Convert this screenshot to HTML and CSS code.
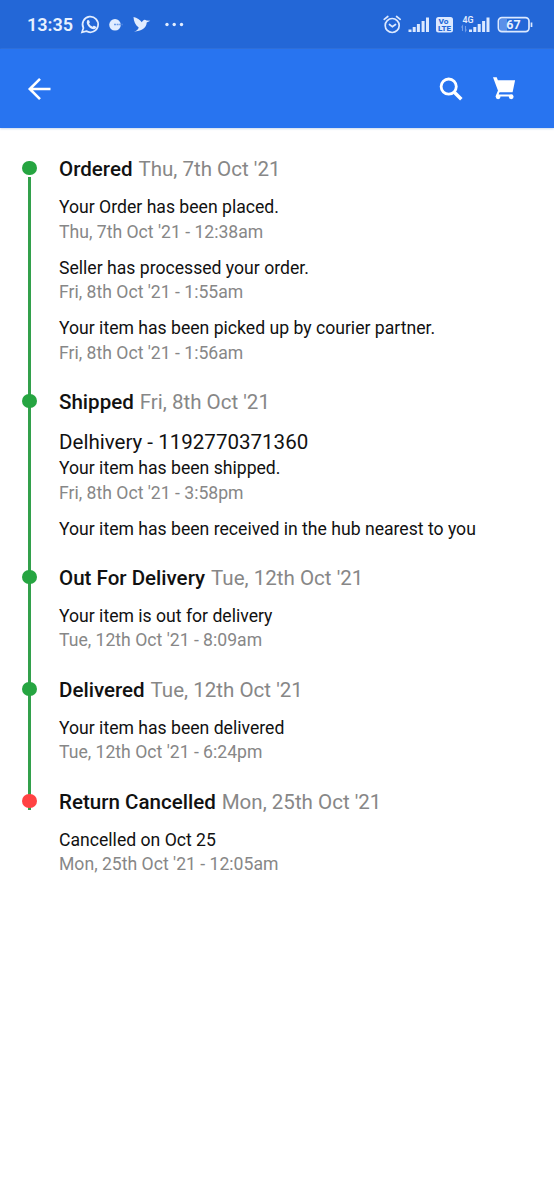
FILE: index.html
```html
<!DOCTYPE html>
<html lang="en">
<head>
<meta charset="utf-8">
<title>Order tracking</title>
<link rel="stylesheet" href="styles.css">
</head>
<body>
<header class="status">
  <span class="clock">13:35</span>
  <svg class="left-icons" width="110" height="49" viewBox="0 0 110 49">
    <path fill="none" stroke="#e2edff" stroke-width="1.7" d="M3 32.300 4.400 28A7.800 7.800 0 1 1 7.300 31.100Z"/>
    <path fill="#e2edff" d="M8.200 20.400c.8-.8 1.500-.6 1.900.2l.7 1.500c.2.500-.5 1.100-.8 1.500.8 1.500 1.900 2.500 3.500 3.200.5-.5 1-1.400 1.600-1.100l1.600.8c.9.500.3 1.800-.4 2.300-3.300 2.100-10.500-4.300-8.100-8.400z"/>
    <circle cx="36" cy="24.800" r="5.800" fill="#e2edff"/>
    <path d="M35 24.600h8.500" stroke="#6d9de9" stroke-width="1.500" stroke-dasharray="2 .6"/>
    <path fill="#e2edff" d="M54.500 17c3.500 1 6.600 2.500 8.300 5.200 1.300-2.400 3-3.200 4.700-1.600l3.800.2-3.600 1.800c-.2 5.400-5.400 8.600-12.700 9.200 2.600-1.200 4.400-2.600 4.700-4.400-3.400-2.400-4.900-5.700-5.200-10.400z"/>
    <g fill="#e2edff"><circle cx="88" cy="24.500" r="1.700"/><circle cx="95.200" cy="24.500" r="1.700"/><circle cx="102.500" cy="24.500" r="1.700"/></g>
  </svg>
  <svg class="right-icons" width="154" height="49" viewBox="380 0 154 49">
    <g fill="none" stroke="#dce9ff" stroke-width="1.700" stroke-linecap="round">
      <circle cx="392.200" cy="25.500" r="7"/>
      <path d="M384.200 19.300l3.600-2.800M400.200 19.300l-3.600-2.800M389.500 24.500l2.900 2.300 3.100-2.300"/>
    </g>
    <g fill="#dce9ff">
      <path d="M408.500 29.500h3V32h-3zM412.700 27h3v5h-3zM416.900 24h3v8h-3zM421.600 21h3v11h-3zM426 17.500h3V32h-3z"/>
      <rect x="436" y="17" width="17" height="15.500" rx="2.500"/>
      <path d="M469 29.500h3V32h-3zM473.300 27h3v5h-3zM477.700 24h3v8h-3zM482.100 21h3v11h-3zM486.500 17.500h3V32h-3z"/>
    </g>
    <text class="volte" x="443.500" y="24.200" textLength="10" lengthAdjust="spacingAndGlyphs">Vo</text>
    <text class="volte" x="444.500" y="31" textLength="13" lengthAdjust="spacingAndGlyphs">LTE</text>
    <text class="network" x="462.500" y="22.500">4G</text>
    <path d="M462.500 31v-5l-1 1.500M465.500 26v5l1-1.500" fill="none" stroke="#74a0ea" stroke-width="1.100"/>
    <rect x="500" y="19" width="7" height="12" fill="#5b90e8"/>
    <rect x="498.400" y="17.600" width="30.600" height="14" rx="3.500" fill="none" stroke="#dce9ff" stroke-width="1.700"/>
    <path d="M531.500 22.500v4.500" stroke="#dce9ff" stroke-width="1.700"/>
    <text class="battery" x="513.500" y="29">67</text>
  </svg>
</header>
<nav class="toolbar">
  <svg class="back" width="24" height="24" viewBox="0 0 24 24"><path d="M23.500 12H3M13 1.800 2.800 12 13 22.200" fill="none" stroke="#fff" stroke-width="2.600"/></svg>
  <svg class="search" width="24" height="24" viewBox="0 0 24 24"><circle cx="9.700" cy="9.600" r="7.600" fill="none" stroke="#fff" stroke-width="2.800"/><path d="m15.300 15.200 7 7" stroke="#fff" stroke-width="3.500"/></svg>
  <svg class="cart" width="24" height="24" viewBox="0 0 24 24"><path d="M0 .2h3.700L4.900 3.300h17.200L19.600 15.200H5.600z" fill="#fff"/><path d="M5.900 14 4 18.500h15.500" fill="none" stroke="#fff" stroke-width="2"/><circle cx="5.100" cy="19.800" r="2.400" fill="#fff"/><circle cx="18.200" cy="19.800" r="2.400" fill="#fff"/></svg>
</nav>
<main class="timeline">
  <section class="step first">
    <h2>Ordered <span>Thu, 7th Oct '21</span></h2>
    <div class="event"><p>Your Order has been placed.</p><time>Thu, 7th Oct '21 - 12:38am</time></div>
    <div class="event"><p>Seller has processed your order.</p><time>Fri, 8th Oct '21 - 1:55am</time></div>
    <div class="event"><p>Your item has been picked up by courier partner.</p><time>Fri, 8th Oct '21 - 1:56am</time></div>
  </section>
  <section class="step">
    <h2>Shipped <span>Fri, 8th Oct '21</span></h2>
    <p class="courier">Delhivery - 1192770371360</p>
    <div class="event"><p>Your item has been shipped.</p><time>Fri, 8th Oct '21 - 3:58pm</time></div>
    <div class="event"><p>Your item has been received in the hub nearest to you</p></div>
  </section>
  <section class="step">
    <h2>Out For Delivery <span>Tue, 12th Oct '21</span></h2>
    <div class="event"><p>Your item is out for delivery</p><time>Tue, 12th Oct '21 - 8:09am</time></div>
  </section>
  <section class="step">
    <h2>Delivered <span>Tue, 12th Oct '21</span></h2>
    <div class="event"><p>Your item has been delivered</p><time>Tue, 12th Oct '21 - 6:24pm</time></div>
  </section>
  <section class="step cancelled">
    <h2>Return Cancelled <span>Mon, 25th Oct '21</span></h2>
    <div class="event"><p>Cancelled on Oct 25</p><time>Mon, 25th Oct '21 - 12:05am</time></div>
  </section>
</main>
</body>
</html>
```
FILE: styles.css
```css
* { box-sizing: border-box; }
body {
  margin: 0;
  min-height: 1200px;
  background: #fff;
  color: #111;
  font-family: Roboto, sans-serif;
}
svg { display: block; flex: none; }
.status {
  display: flex;
  align-items: center;
  height: 49px;
  padding-left: 27px;
  background: #2367d7;
}
.clock {
  width: 52px;
  color: #e8f1ff;
  font-size: 18px;
  font-weight: 600;
}
.right-icons { margin-left: auto; margin-right: 20px; }
.volte { fill: #2367d7; font-size: 7.500px; font-weight: 800; text-anchor: middle; }
.network { fill: #e2edff; font-size: 8.800px; font-weight: 600; }
.battery { fill: #e8f1ff; font-size: 12.500px; font-weight: 700; text-anchor: middle; }
.toolbar {
  display: flex;
  align-items: center;
  height: 79px;
  padding: 0 37px 0 26.500px;
  background: #2874f0;
  box-shadow: 0 1px 2px #cbd8ec;
}
.search { margin-left: auto; margin-right: 30px; }
.timeline { padding: 27px 20px 0 59px; }
.step { position: relative; padding-bottom: 11.300px; }
.step::before {
  content: "";
  position: absolute;
  top: 13px;
  bottom: -13px;
  left: -31px;
  width: 3px;
  background: #32a04b;
}
.step.first::before { top: 22px; }
.step.cancelled::before { height: 9px; bottom: auto; }
.step::after {
  content: "";
  position: absolute;
  z-index: 1;
  top: 6px;
  left: -36.700px;
  width: 14.400px;
  height: 14.400px;
  border-radius: 50%;
  background: #26a541;
}
.step.cancelled::after { background: #ff4343; }
h2 {
  margin: 0 0 12px;
  font-size: 20.550px;
  font-weight: 500;
  line-height: 28px;
  white-space: nowrap;
}
h2 span { margin-left: 0.800px; color: #878787; font-weight: 400; }
p { margin: 0; }
.courier { font-size: 20.550px; line-height: 28px; }
.event { padding-bottom: 11.400px; font-size: 17.620px; line-height: 24.600px; white-space: nowrap; }
.event time { display: block; color: #878787; }
```
